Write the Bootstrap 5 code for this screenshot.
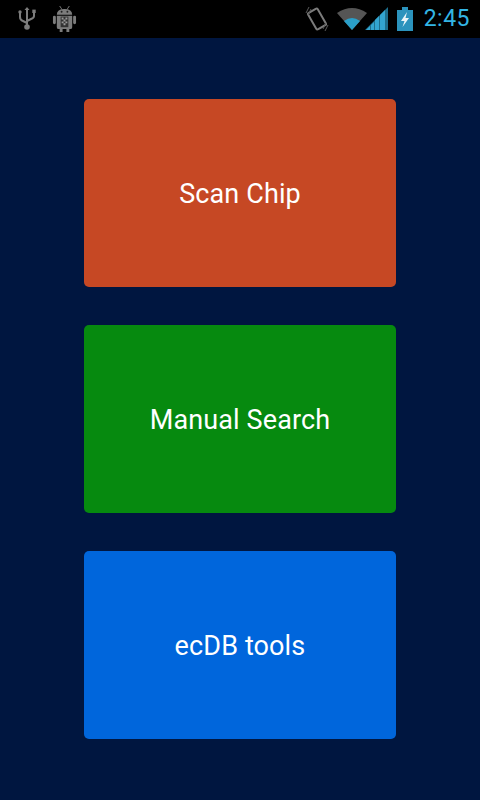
<!DOCTYPE html>
<html lang="en">
<head>
    <meta charset="UTF-8">
    <meta name="viewport" content="width=device-width, initial-scale=1.0">
    <title>ecDB</title>
    <link rel="stylesheet" href="https://cdn.jsdelivr.net/npm/bootstrap@5.3.0/dist/css/bootstrap.min.css">
    <style>
        html, body { height: 800px; overflow: hidden; }
        body { background: #001640; font-family: Roboto, sans-serif; }
        .status-bar { height: 38px; background: #000; padding: 0 10px 0 18px; }
        .clock { font-size: 23px; color: #33b5e5; line-height: 38px; margin-left: 11px; letter-spacing: .5px; }
        .menu-stack { width: 312px; gap: 38px; padding-top: 61px; }
        .menu-btn { height: 188px; border: 0; border-radius: 5px; color: #fff; font-size: 27px; letter-spacing: .12px; padding-top: 8px; }
        .menu-btn:hover, .menu-btn:active { color: #fff; }
        .btn-scan, .btn-scan:hover { background: #c64824; }
        .btn-manual, .btn-manual:hover { background: #068a0f; }
        .btn-tools, .btn-tools:hover { background: #0066dc; }
    </style>
</head>
<body>

<!-- Status bar -->
<div class="status-bar d-flex align-items-center justify-content-between">
    <div class="d-flex align-items-center gap-3">
        <svg width="18" height="24" viewBox="0 0 18 24">
            <g fill="none" stroke="#7c7c7c" stroke-width="2">
                <path d="M9 2v18M2 6v4q0 3 3 4l4 2M16 5v4q0 2-3 3l-4 2"/>
            </g>
            <circle cx="9" cy="20" r="2.800" fill="#7c7c7c"/>
            <path d="M9 0l2.500 3h-5z" fill="#7c7c7c"/>
            <circle cx="2" cy="5" r="1.700" fill="#7c7c7c"/>
            <rect x="14.300" y="2.600" width="3.400" height="3.400" fill="#7c7c7c"/>
        </svg>
        <svg width="25" height="28" viewBox="0 0 26 27">
            <path d="M8 0l2 3M18 0l-2 3" stroke="#7c7c7c" stroke-width="1"/>
            <path d="M5 9q0-6 8-6t8 6z" fill="#7c7c7c"/>
            <circle cx="10" cy="6" r="1" fill="#222"/>
            <circle cx="16" cy="6" r="1" fill="#222"/>
            <rect x="1" y="10" width="3" height="9" rx="1.500" fill="#7c7c7c"/>
            <rect x="22" y="10" width="3" height="9" rx="1.500" fill="#7c7c7c"/>
            <path d="M5 10h16v12q0 2-2 2h-1v3h-3v-3h-4v3H8v-3H7q-2 0-2-2z" fill="#7c7c7c"/>
            <path d="M9 11h8v11H9z" fill="#333"/>
            <path d="M10 12h2v2h-2zM14 12h2v2h-2zM12 14h2v2h-2zM10 16h2v2h-2zM14 16h2v2h-2zM12 18h2v2h-2z" fill="#999"/>
        </svg>
    </div>
    <div class="d-flex align-items-center">
        <svg width="24" height="28" viewBox="0 0 24 28">
            <rect x="6.500" y="4.500" width="11" height="19" rx="1.500" transform="rotate(-30 12 14)" fill="none" stroke="#7c7c7c" stroke-width="2"/>
            <path d="M3 10l3-6M18 24l3-6M1 8l3-6M20 26l3-6" stroke="#5a5a5a" stroke-width="1"/>
        </svg>
        <svg class="ms-2" width="52" height="24" viewBox="0 0 52 24">
            <path d="M0 6q15-10 30 0L15 23z" fill="#555"/>
            <path d="M7 14q8-6 16 0l-8 9z" fill="#2a9fc9"/>
            <path d="M28 23L51 0v23z" fill="#1d6e8c"/>
            <path d="M29 23l4-4v4zM34 23v-5l3-3v8zM38 23V13l4-4v14zM43 23V8l5-5v20z" fill="#33a5d0"/>
        </svg>
        <svg class="ms-2" width="16" height="24" viewBox="0 0 16 24">
            <path d="M5 0h6v3h5v21H0V3h5z" fill="#2b93bd"/>
            <path d="M10 5L4 14h3.500l-2 6L12 11H8.500z" fill="#e8f4f8"/>
        </svg>
        <span class="clock">2:45</span>
    </div>
</div>

<!-- Main menu -->
<div class="menu-stack d-flex flex-column mx-auto">
    <button class="btn menu-btn btn-scan" type="button">Scan Chip</button>
    <button class="btn menu-btn btn-manual" type="button">Manual Search</button>
    <button class="btn menu-btn btn-tools" type="button">ecDB tools</button>
</div>

<script src="https://cdn.jsdelivr.net/npm/bootstrap@5.3.0/dist/js/bootstrap.bundle.min.js"></script>
</body>
</html>
